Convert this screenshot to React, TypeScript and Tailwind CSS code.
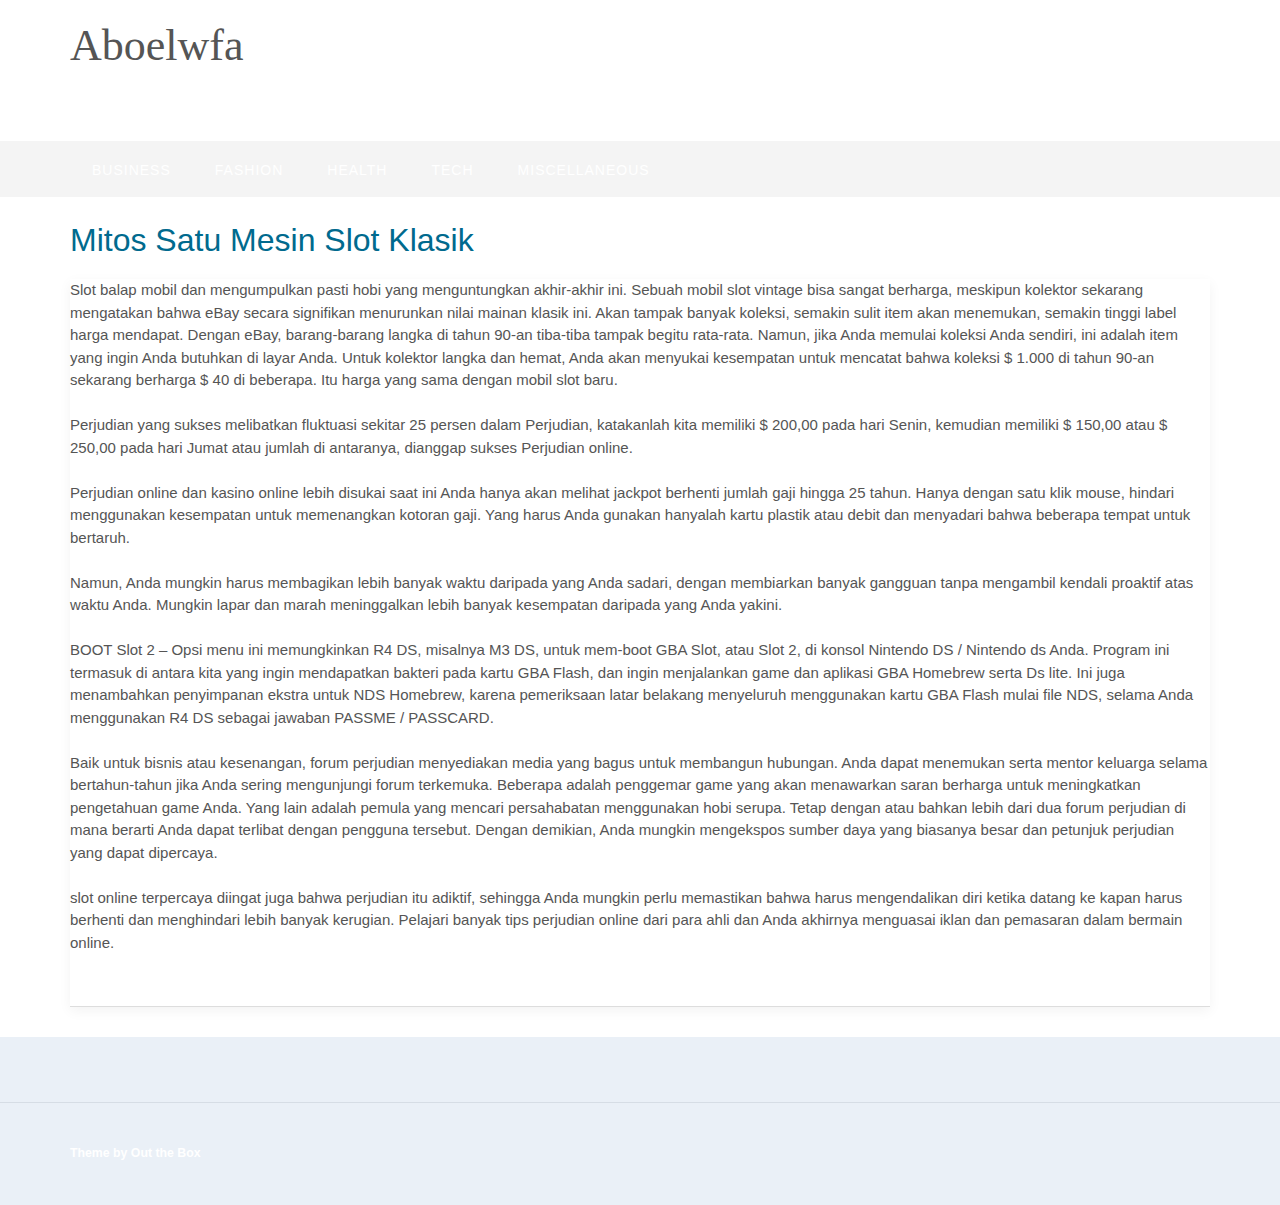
const paragraphs = [
  "Slot balap mobil dan mengumpulkan pasti hobi yang menguntungkan akhir-akhir ini. Sebuah mobil slot vintage bisa sangat berharga, meskipun kolektor sekarang mengatakan bahwa eBay secara signifikan menurunkan nilai mainan klasik ini. Akan tampak banyak koleksi, semakin sulit item akan menemukan, semakin tinggi label harga mendapat. Dengan eBay, barang-barang langka di tahun 90-an tiba-tiba tampak begitu rata-rata. Namun, jika Anda memulai koleksi Anda sendiri, ini adalah item yang ingin Anda butuhkan di layar Anda. Untuk kolektor langka dan hemat, Anda akan menyukai kesempatan untuk mencatat bahwa koleksi $ 1.000 di tahun 90-an sekarang berharga $ 40 di beberapa. Itu harga yang sama dengan mobil slot baru.",
  "Perjudian yang sukses melibatkan fluktuasi sekitar 25 persen dalam Perjudian, katakanlah kita memiliki $ 200,00 pada hari Senin, kemudian memiliki $ 150,00 atau $ 250,00 pada hari Jumat atau jumlah di antaranya, dianggap sukses Perjudian online.",
  "Perjudian online dan kasino online lebih disukai saat ini Anda hanya akan melihat jackpot berhenti jumlah gaji hingga 25 tahun. Hanya dengan satu klik mouse, hindari menggunakan kesempatan untuk memenangkan kotoran gaji. Yang harus Anda gunakan hanyalah kartu plastik atau debit dan menyadari bahwa beberapa tempat untuk bertaruh.",
  "Namun, Anda mungkin harus membagikan lebih banyak waktu daripada yang Anda sadari, dengan membiarkan banyak gangguan tanpa mengambil kendali proaktif atas waktu Anda. Mungkin lapar dan marah meninggalkan lebih banyak kesempatan daripada yang Anda yakini.",
  "BOOT Slot 2 – Opsi menu ini memungkinkan R4 DS, misalnya M3 DS, untuk mem-boot GBA Slot, atau Slot 2, di konsol Nintendo DS / Nintendo ds Anda. Program ini termasuk di antara kita yang ingin mendapatkan bakteri pada kartu GBA Flash, dan ingin menjalankan game dan aplikasi GBA Homebrew serta Ds lite. Ini juga menambahkan penyimpanan ekstra untuk NDS Homebrew, karena pemeriksaan latar belakang menyeluruh menggunakan kartu GBA Flash mulai file NDS, selama Anda menggunakan R4 DS sebagai jawaban PASSME / PASSCARD.",
  "Baik untuk bisnis atau kesenangan, forum perjudian menyediakan media yang bagus untuk membangun hubungan. Anda dapat menemukan serta mentor keluarga selama bertahun-tahun jika Anda sering mengunjungi forum terkemuka. Beberapa adalah penggemar game yang akan menawarkan saran berharga untuk meningkatkan pengetahuan game Anda. Yang lain adalah pemula yang mencari persahabatan menggunakan hobi serupa. Tetap dengan atau bahkan lebih dari dua forum perjudian di mana berarti Anda dapat terlibat dengan pengguna tersebut. Dengan demikian, Anda mungkin mengekspos sumber daya yang biasanya besar dan petunjuk perjudian yang dapat dipercaya.",
  "slot online terpercaya diingat juga bahwa perjudian itu adiktif, sehingga Anda mungkin perlu memastikan bahwa harus mengendalikan diri ketika datang ke kapan harus berhenti dan menghindari lebih banyak kerugian. Pelajari banyak tips perjudian online dari para ahli dan Anda akhirnya menguasai iklan dan pemasaran dalam bermain online.",
];

const navItems = ["Business", "Fashion", "Health", "Tech", "Miscellaneous"];

export default function App() {
  return (
    <div className="flex min-h-[1205px] flex-col bg-white font-['Liberation_Sans',Arial,sans-serif] text-[#555]">
      {/* Header */}
      <header className="h-[141px] px-[70px] pt-[21px]">
        <h1 className="font-['Liberation_Serif','Times_New_Roman',serif] text-[44px] leading-[50px] text-[#555]">
          Aboelwfa
        </h1>
      </header>

      {/* Nav */}
      <nav className="flex h-[56px] items-center bg-[#f4f4f4] pl-[92px]">
        {navItems.map((item) => (
          <a
            key={item}
            href="#"
            className="mr-[44px] pt-[2px] text-[14px] uppercase tracking-[1px] text-white"
          >
            {item}
          </a>
        ))}
      </nav>

      {/* Content */}
      <main className="px-[70px] pb-[30px]">
        <h2 className="pt-[24px] text-[32px] leading-[38px] text-[#006a8e]">
          Mitos Satu Mesin Slot Klasik
        </h2>
        <article className="mt-[20px] border-b border-[#ddd] bg-white pb-[29px] shadow-[0_4px_12px_rgba(0,0,0,0.05)]">
          {paragraphs.map((p, i) => (
            <p key={i} className="mb-[22.5px] text-[15px] leading-[22.5px] text-[#555]">
              {p}
            </p>
          ))}
        </article>
      </main>

      {/* Footer */}
      <footer className="flex-1 bg-[#eaf0f7]">
        <div className="h-[66px] border-b border-[#d6dde5]" />
        <div className="px-[70px] pt-[41px] pb-[40px] text-[12.3px] font-bold text-white">
          Theme by Out the Box
        </div>
      </footer>
    </div>
  );
}
